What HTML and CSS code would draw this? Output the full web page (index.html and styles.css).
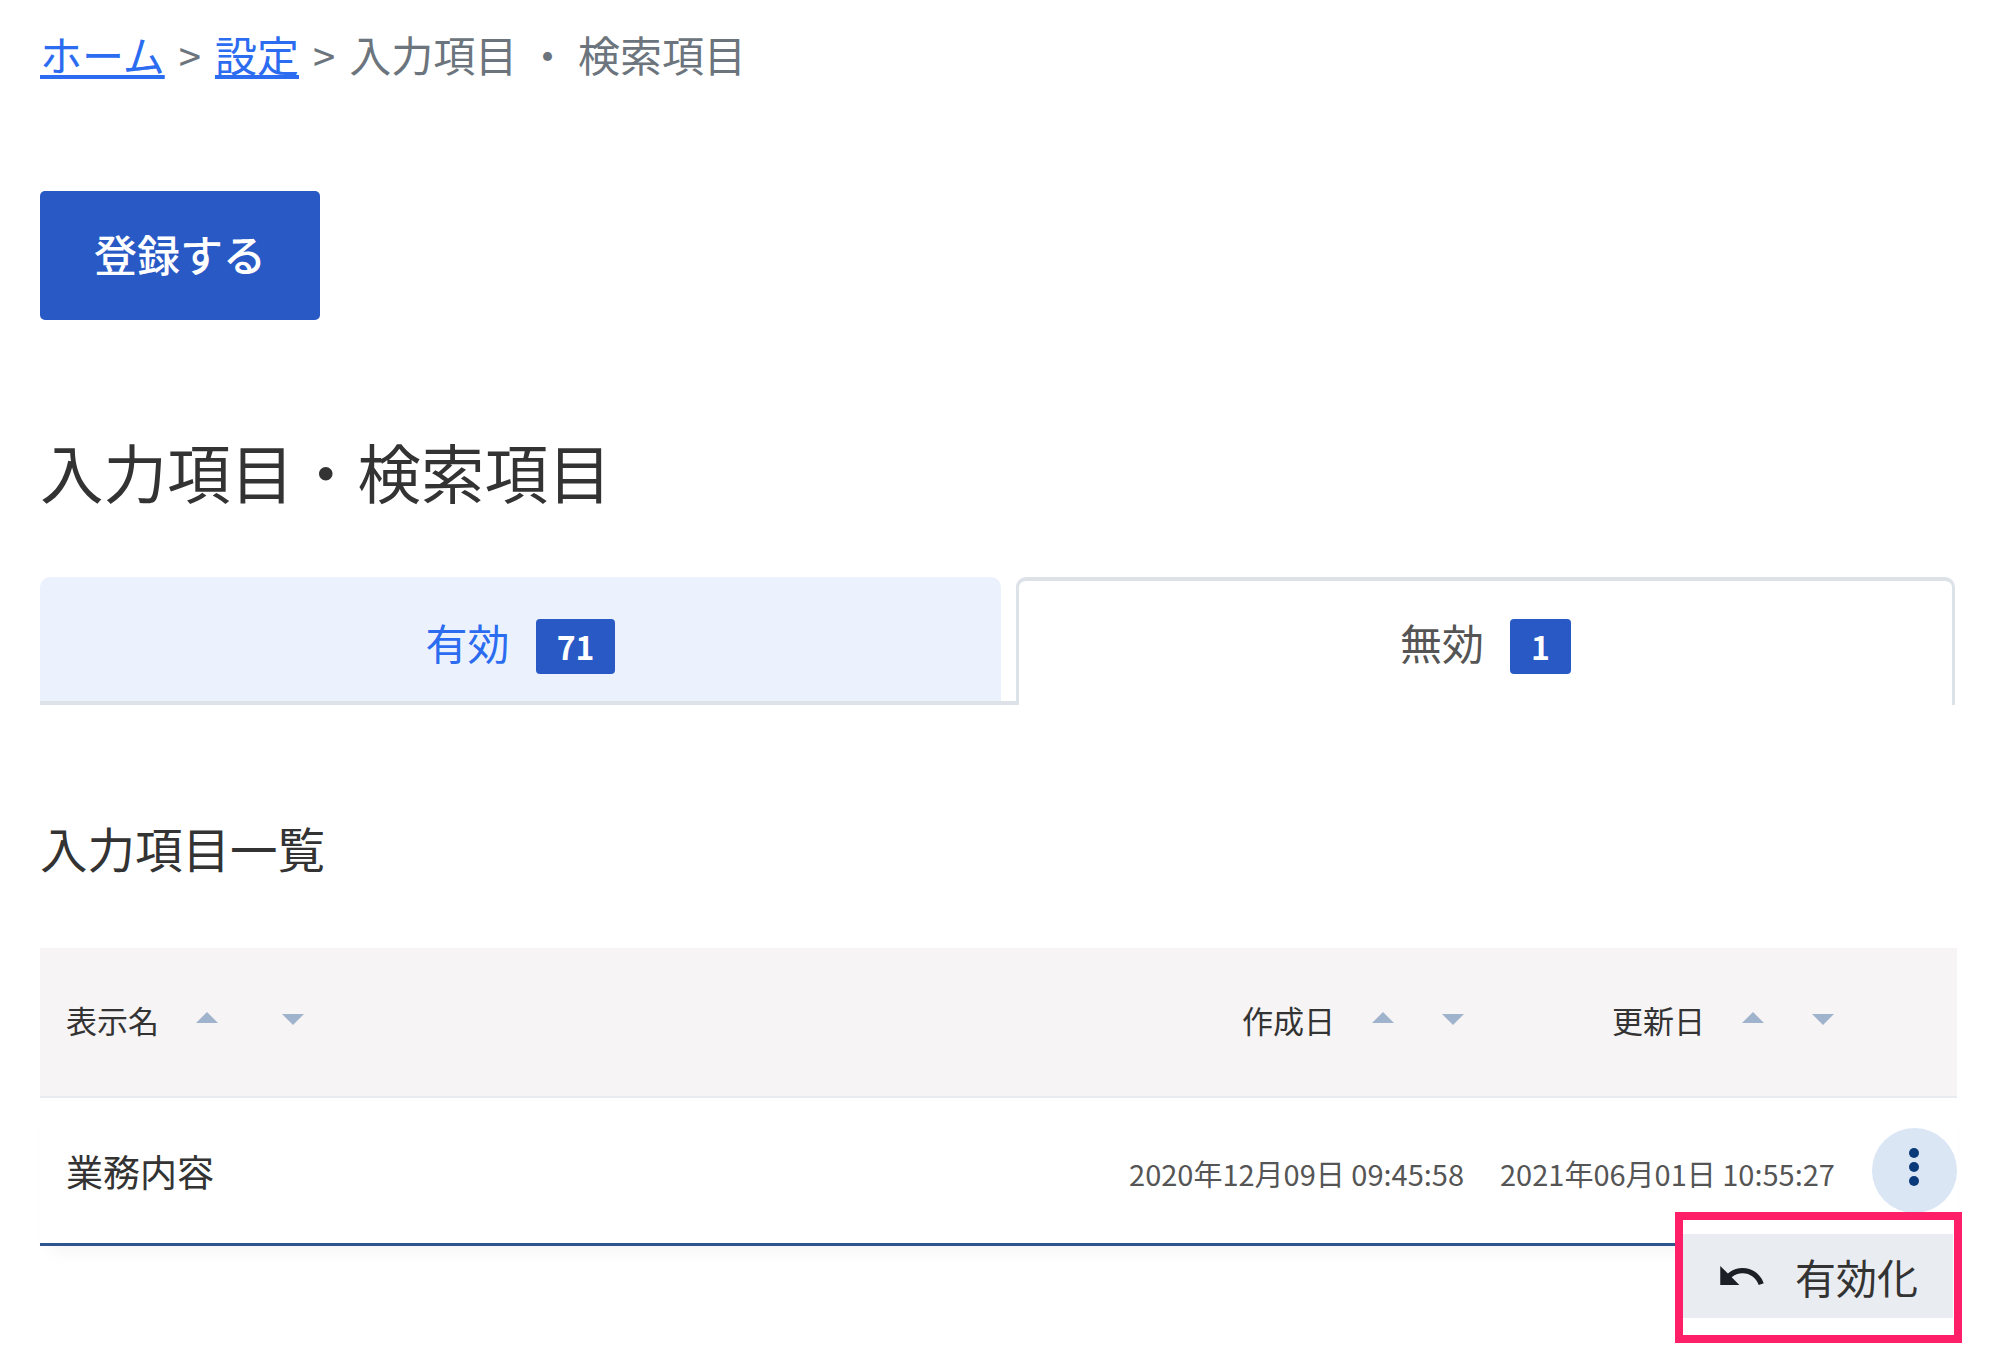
FILE: index.html
```html
<!DOCTYPE html>
<html lang="ja">
<head>
<meta charset="UTF-8" />
<title>入力項目・検索項目</title>
<link rel="stylesheet" href="styles.css">
</head>
<body>

<nav class="breadcrumb">
  <a href="#">ホーム</a>
  <span class="sep">&gt;</span>
  <a href="#">設定</a>
  <span class="sep">&gt;</span>
  <span>入力項目 ・ 検索項目</span>
</nav>

<button class="register-btn">登録する</button>

<h1>入力項目・検索項目</h1>

<div class="tabs">
  <div class="tab tab-active">有効 <span class="badge">71</span></div>
  <div class="tab-gap"></div>
  <div class="tab tab-outline">無効 <span class="badge">1</span></div>
</div>

<h2>入力項目一覧</h2>

<div class="list">
  <div class="list-head">
    <div class="col col-name">
      表示名
      <span class="sort sort-wide"><i class="caret-up"></i><i class="caret-down"></i></span>
    </div>
    <div class="col col-date">
      作成日
      <span class="sort"><i class="caret-up"></i><i class="caret-down"></i></span>
    </div>
    <div class="col col-date">
      更新日
      <span class="sort"><i class="caret-up"></i><i class="caret-down"></i></span>
    </div>
  </div>

  <div class="list-row">
    <div class="row-name">業務内容</div>
    <div class="row-date">2020年12月09日 09:45:58</div>
    <div class="row-date">2021年06月01日 10:55:27</div>
    <button class="more-btn" aria-label="メニュー"><i></i><i></i><i></i></button>

    <!-- row menu, highlighted -->
    <div class="row-menu">
      <div class="menu-item">
        <svg class="undo-icon" viewBox="0 0 24 24"><path d="M12.5 8c-2.65 0-5.05.99-6.9 2.6L2 7v9h9l-3.62-3.62c1.39-1.16 3.16-1.88 5.12-1.88 3.54 0 6.55 2.31 7.6 5.5l2.37-.78C21.08 11.03 17.15 8 12.5 8z"/></svg>
        有効化
      </div>
    </div>
  </div>
</div>

</body>
</html>
```

FILE: styles.css
```css
html {
  height: 100%;
}
body {
  font-family: "Noto Sans CJK JP", "Noto Sans", sans-serif;
  background: #fff;
  color: #333;
  margin: 0;
  padding: 30px 42px 0 40px;
  min-height: 100%;
  box-sizing: border-box;
}

.breadcrumb {
  display: flex;
  align-items: baseline;
  height: 48px;
  font-size: 42px;
  line-height: 48px;
  color: #6c757d;
  white-space: nowrap;
}
.breadcrumb a {
  color: #2b6cf0;
}
.breadcrumb .sep {
  margin: 0 14px;
  font-size: 40px;
}

.register-btn {
  display: block;
  width: 280px;
  height: 129px;
  margin-top: 113px;
  padding: 0 0 5px;
  background: #2859c5;
  border: none;
  border-radius: 5px;
  color: #fff;
  font: 500 43px "Noto Sans CJK JP", sans-serif;
}

h1 {
  margin: 110px 0 0;
  font-size: 63.5px;
  font-weight: 400;
  line-height: 80px;
}

.tabs {
  display: flex;
  margin-top: 67px;
  margin-right: 2px;
  height: 128px;
}
.tab {
  display: flex;
  align-items: center;
  justify-content: center;
  gap: 26px;
  box-sizing: border-box;
  font-size: 42px;
  border-radius: 10px 10px 0 0;
}
.tab-active {
  width: 961px;
  padding-top: 4px;
  background: #ebf2fd;
  color: #2b6cf0;
  border-bottom: 4px solid #dde2e8;
}
.tab-gap {
  width: 15px;
  border-bottom: 4px solid #dde2e8;
}
.tab-outline {
  flex: 1;
  padding-bottom: 4px;
  color: #555;
  border: 3px solid #dde2e8;
  border-top-width: 4px;
  border-bottom: none;
}
.badge {
  display: flex;
  align-items: center;
  justify-content: center;
  min-width: 60px;
  height: 55px;
  margin-top: 10px;
  padding: 0 21px;
  box-sizing: border-box;
  background: #2859c5;
  border-radius: 4px;
  color: #fff;
  font-size: 32px;
  font-weight: 700;
}

h2 {
  margin: 113px 0 0;
  font-size: 47.5px;
  font-weight: 400;
  line-height: 60px;
}

.list {
  margin-top: 70px;
}
.list-head,
.list-row {
  display: grid;
  grid-template-columns: 1fr 335px 334px 87px;
  column-gap: 36px;
  align-items: center;
  padding-left: 26px;
}
.list-head {
  height: 150px;
  box-sizing: border-box;
  padding-bottom: 5px;
  background: #f6f4f5;
  border-bottom: 2px solid #e8ecf0;
  font-size: 31px;
}
.col {
  display: flex;
  align-items: center;
}
.col-date {
  justify-content: flex-end;
}
.sort {
  display: flex;
  align-items: center;
  gap: 48px;
  margin-left: 37px;
  margin-top: 5px;
}
.sort-wide {
  gap: 64px;
}
.sort i {
  display: block;
  width: 0;
  height: 0;
  border-left: 11px solid transparent;
  border-right: 11px solid transparent;
}
.caret-up {
  border-bottom: 11px solid #9fb3cc;
  margin-top: -10px;
}
.caret-down {
  border-top: 11px solid #9fb3cc;
  margin-top: -6px;
}

.list-row {
  position: relative;
  height: 148px;
  box-sizing: border-box;
  border-bottom: 3px solid #2d5590;
  box-shadow: 0 14px 18px -10px rgba(0,0,0,0.05);
}
.row-name {
  font-size: 37px;
}
.row-date {
  font-size: 29px;
  color: #555;
  text-align: right;
  white-space: nowrap;
  padding-top: 4px;
}
.more-btn {
  display: flex;
  flex-direction: column;
  align-items: center;
  justify-content: center;
  gap: 4px;
  justify-self: end;
  width: 85px;
  height: 85px;
  padding: 0 2px 8px 0;
  background: #dbe6f5;
  border: none;
  border-radius: 50%;
}
.more-btn i {
  width: 10px;
  height: 10px;
  border-radius: 50%;
  background: #0a3a7a;
}

.row-menu {
  position: absolute;
  top: 114px;
  right: -5px;
  width: 271px;
  padding: 14px 0 17px;
  background: #fff;
  border: 8px solid #ff1f68;
  z-index: 10;
}
.menu-item {
  display: flex;
  align-items: center;
  height: 84px;
  width: 270px;
  padding-left: 33px;
  box-sizing: border-box;
  background: #e9ecf0;
  font-size: 41px;
  color: #333;
}
.undo-icon {
  width: 51px;
  height: 51px;
  margin-right: 28px;
  fill: #1c2026;
}
```
